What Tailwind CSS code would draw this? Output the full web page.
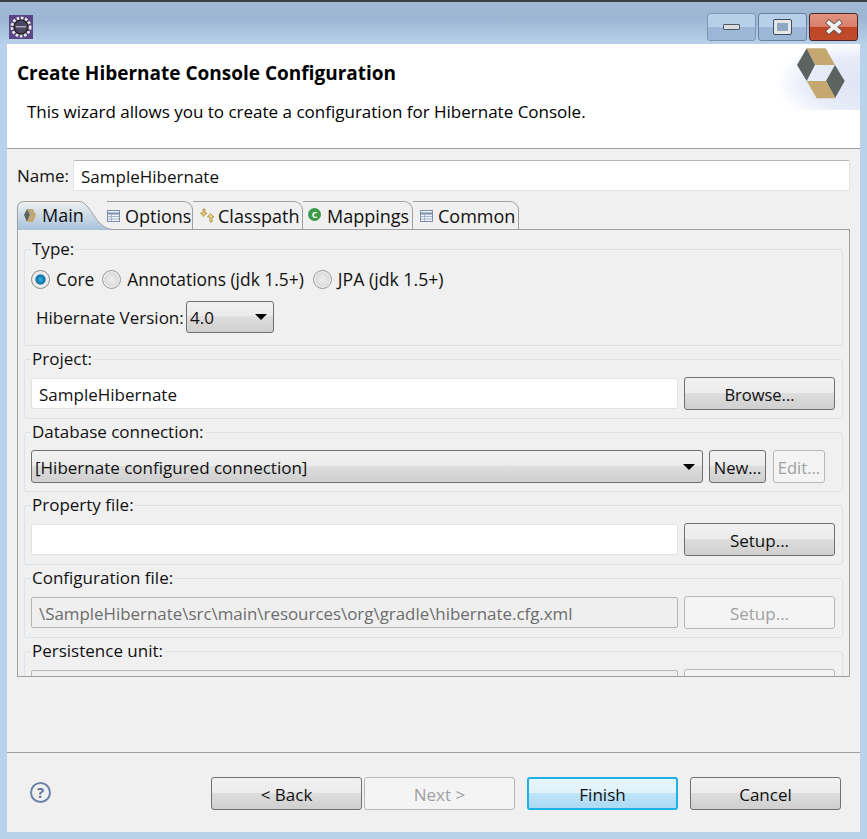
<!DOCTYPE html>
<html>
<head>
<meta charset="utf-8">
<title>Create Hibernate Console Configuration</title>
<script src="https://cdn.jsdelivr.net/npm/@tailwindcss/browser@4"></script>
</head>
<body class="bg-[#b9d1ea] font-['Open_Sans',sans-serif] text-[17px] text-[#111]">
<div class="flex h-[839px] w-[867px] flex-col overflow-hidden bg-[#b9d1ea]">
  <!-- Title bar -->
  <div class="flex h-[44px] shrink-0 items-start border-t-2 border-[#3c3f44] bg-[linear-gradient(#a0b9d5,#9cb6d3_40%,#b9d1ea)]">
    <svg class="ml-[9px] mt-[13px]" width="24" height="24" viewBox="0 0 24 24">
      <rect width="24" height="24" fill="#5a4585"/>
      <circle cx="12" cy="12" r="9" fill="#4d4a66" stroke="#e6e6e6" stroke-width="3" stroke-dasharray="2.6 1.6"/>
      <circle cx="12" cy="12" r="7" fill="#4b4760" stroke="#1c1c22" stroke-width="1.2"/>
      <rect x="7" y="11" width="10" height="1.5" fill="#a8a6bc"/>
    </svg>
    <div class="ml-auto mr-[9px] mt-[11px] flex gap-[2px]">
      <div class="flex h-[28px] w-[49px] items-center justify-center rounded-[3px] border border-[#7e96b3] bg-[linear-gradient(#b7cfe8_50%,#9db8d6_50%)]">
        <div class="h-[6px] w-[17px] rounded-[1px] border border-[#4a5a6c] bg-[#dcdcdc]"></div>
      </div>
      <div class="flex h-[28px] w-[49px] items-center justify-center rounded-[3px] border border-[#66809e] bg-[linear-gradient(#b7cfe8_50%,#9db8d6_50%)]">
        <div class="h-[14px] w-[17px] rounded-[1px] border-[3px] border-[#e6e6e6] bg-[#8ea8c4] outline outline-[#3f4f60]"></div>
      </div>
      <div class="flex h-[28px] w-[49px] items-center justify-center rounded-[3px] border border-[#4a2426] bg-[linear-gradient(#e2937f,#d9806c_48%,#bf4526_50%,#c04c2c)]">
        <svg width="20" height="16" viewBox="0 0 20 16">
          <path d="M3 2 L17 14 M17 2 L3 14" stroke="#4f4a4a" stroke-width="5.4"/>
          <path d="M3.5 2.5 L16.5 13.5 M16.5 2.5 L3.5 13.5" stroke="#f1efef" stroke-width="4"/>
        </svg>
      </div>
    </div>
  </div>

  <div class="mx-[7px] mb-[7px] flex flex-1 flex-col bg-[#f0f0f0]">
    <!-- Banner -->
    <div class="relative h-[105px] shrink-0 overflow-hidden border-b border-[#a0a0a0] bg-white">
      <div class="absolute right-0 top-0 h-[66px] w-[80px] bg-[radial-gradient(ellipse_at_100%_60%,#dfe5f5,#e6ebf8_45%,#ffffff_75%)]"></div>
      <svg class="absolute left-[790px] top-[4px]" width="48" height="51" viewBox="797 48 48 51">
        <path d="M806.7 48.3H825.7L835 65H815Z" fill="#c4a870"/>
        <path d="M806.7 48.3L815 65L806.7 81L797 65Z" fill="#5a6360"/>
        <path d="M835 65L844.7 81L835 98.3L826 81Z" fill="#5a6360"/>
        <path d="M806.7 81H826L835.7 98.3H816.7Z" fill="#c4a870"/>
      </svg>
      <h1 class="relative ml-[10px] mt-[16px] text-[19px] font-bold leading-[26px] text-black">Create Hibernate Console Configuration</h1>
      <p class="relative ml-[20px] mt-[14px] leading-[24px] text-black">This wizard allows you to create a configuration for Hibernate Console.</p>
    </div>

    <div class="flex flex-1 flex-col">
      <!-- Name -->
      <div class="ml-[10px] mr-[10px] mt-[11px] flex h-[31px] shrink-0 items-center">
        <span class="w-[56px] pt-[1px]">Name:</span>
        <div class="flex h-[31px] flex-1 items-center rounded-[2px] border border-[#e3e3e3] border-t-[#b5b5b5] bg-white pl-[7px] pt-[2px]">SampleHibernate</div>
      </div>

      <!-- Tab folder -->
      <div class="mx-[10px] mt-[10px] flex h-[476px] shrink-0 flex-col">
        <div class="flex h-[29px] shrink-0 border-b border-[#a0a0a0] text-[18px]">
          <div class="relative flex w-[96px] shrink-0 items-center pl-[7px]">
            <svg class="absolute left-0 top-0" width="96" height="29" viewBox="0 0 96 29">
              <defs><linearGradient id="active" x1="0" y1="0" x2="0" y2="1"><stop offset="0" stop-color="#f0f0f0"/><stop offset="1" stop-color="#a8c2dc"/></linearGradient></defs>
              <path d="M0.5 29V7Q0.5 0.5 7 0.5H62C74 0.5 78 28 96 28.5V29Z" fill="url(#active)"/>
              <path d="M0.5 29V7Q0.5 0.5 7 0.5H62C74 0.5 78 28 96 28.5" fill="none" stroke="#a0a0a0"/>
            </svg>
            <svg class="relative mr-[6px]" width="12" height="13" viewBox="0 0 12 13">
              <path d="M3 0H9L12 6H6Z" fill="#bda877"/><path d="M3 0L6 6L3 13L0 6Z" fill="#5a6360"/><path d="M12 6L9 13H3L6 6Z" fill="#c4a870"/>
            </svg>
            <span class="relative pt-[1px]">Main</span>
          </div>
          <div class="-ml-[6px] flex w-[86px] items-center rounded-tr-[9px] border-r border-t border-[#a0a0a0]">
            <svg class="mr-[5px]" width="13" height="12" viewBox="0 0 13 12">
              <rect x="0.5" y="0.5" width="12" height="11" fill="#eef1f6" stroke="#7c8fb0"/>
              <path d="M1 3.5H12" stroke="#7c8fb0" stroke-width="2"/><path d="M1 6.5H12M1 9H12M4.5 4V11" stroke="#a7b4ca"/>
            </svg>
            <span class="pt-[1px]">Options</span>
          </div>
          <div class="flex w-[110px] items-center rounded-tr-[9px] border-r border-t border-[#a0a0a0] pl-[6px]">
            <svg class="mr-[3px]" width="16" height="15" viewBox="0 0 16 15">
              <path d="M4 1V5H1.5L4.5 8.5L8 5H6V1Z" fill="#e8cf7c" stroke="#a8863a" stroke-width="0.8"/>
              <path d="M11 14V9H8.5L11.5 5.5L15 9H13V14Z" fill="#f0d98a" stroke="#a8863a" stroke-width="0.8"/>
            </svg>
            <span class="pt-[1px]">Classpath</span>
          </div>
          <div class="flex w-[110px] items-center rounded-tr-[9px] border-r border-t border-[#a0a0a0] pl-[5px]">
            <span class="mb-[3px] mr-[6px] flex h-[13px] w-[13px] items-center justify-center rounded-full bg-[#3c9a48] text-[9px] font-bold leading-none text-white">C</span>
            <span class="pt-[1px]">Mappings</span>
          </div>
          <div class="flex w-[106px] items-center rounded-tr-[9px] border-r border-t border-[#a0a0a0] pl-[7px]">
            <svg class="mr-[5px]" width="13" height="12" viewBox="0 0 13 12">
              <rect x="0.5" y="0.5" width="12" height="11" fill="#eef1f6" stroke="#7c8fb0"/>
              <path d="M1 3.5H12" stroke="#7c8fb0" stroke-width="2"/><path d="M1 6.5H12M1 9H12M4.5 4V11" stroke="#a7b4ca"/>
            </svg>
            <span class="pt-[1px]">Common</span>
          </div>
        </div>

        <div class="flex min-h-0 flex-1 flex-col gap-[3px] overflow-hidden border-x border-b border-[#a0a0a0] px-[6px] pt-[9px]">
          <!-- Type -->
          <fieldset class="h-[107px] shrink-0 rounded-[3px] border border-[#dae2ea] pl-[6px] pr-[7px]">
            <legend class="h-[20px] px-[1px] leading-[20px]">Type:</legend>
            <div class="mt-[10px] flex h-[20px] items-center text-[17.4px]">
              <span class="h-[19px] w-[19px] rounded-full border border-[#8a8a8a] bg-[radial-gradient(circle,#35b4e8_0,#0b6fa3_38%,#e8e8e8_46%,#f8f8f8)]"></span>
              <span class="ml-[6px]">Core</span>
              <span class="ml-[8px] h-[19px] w-[19px] rounded-full border border-[#9a9a9a] bg-[radial-gradient(circle,#eeeeee_0,#dcdcdc_55%,#f5f5f5_72%)]"></span>
              <span class="ml-[6px]">Annotations (jdk 1.5+)</span>
              <span class="ml-[9px] h-[19px] w-[19px] rounded-full border border-[#9a9a9a] bg-[radial-gradient(circle,#eeeeee_0,#dcdcdc_55%,#f5f5f5_72%)]"></span>
              <span class="ml-[6px] text-[17.7px]">JPA (jdk 1.5+)</span>
            </div>
            <div class="ml-[5px] mt-[12px] flex h-[32px] items-center pt-[1px]">
              <span class="w-[150px] pt-[1px]">Hibernate Version:</span>
              <div class="-mt-[1px] flex h-[32px] w-[88px] items-center justify-between rounded-[3px] border border-[#707070] bg-[linear-gradient(#f2f2f2,#ebebeb_45%,#dddddd_50%,#cfcfcf)] pl-[3px] pr-[6px]">
                <span class="pt-[2px]">4.0</span>
                <span class="h-0 w-0 border-x-[6px] border-t-[6px] border-x-transparent border-t-black"></span>
              </div>
            </div>
          </fieldset>

          <!-- Project -->
          <fieldset class="h-[70px] shrink-0 rounded-[3px] border border-[#dae2ea] pl-[6px] pr-[7px]">
            <legend class="h-[20px] px-[1px] leading-[20px]">Project:</legend>
            <div class="mt-[8px] flex items-center justify-between">
              <div class="flex h-[31px] w-[647px] items-center rounded-[2px] border border-[#e3e3e3] bg-white pl-[7px] pt-[2px]">SampleHibernate</div>
              <div class="flex h-[33px] w-[151px] items-center justify-center rounded-[3px] border border-[#707070] bg-[linear-gradient(#f2f2f2,#ebebeb_48%,#dddddd_50%,#cfcfcf)] pt-[3px] text-[16.5px]">Browse...</div>
            </div>
          </fieldset>

          <!-- Database connection -->
          <fieldset class="h-[70px] shrink-0 rounded-[3px] border border-[#dae2ea] pl-[6px] pr-[7px]">
            <legend class="h-[20px] px-[1px] leading-[20px]">Database connection:</legend>
            <div class="mt-[8px] flex items-center">
              <div class="flex h-[33px] w-[672px] items-center justify-between rounded-[3px] border border-[#707070] bg-[linear-gradient(#f2f2f2,#ebebeb_48%,#dddddd_50%,#cfcfcf)] pl-[3px] pr-[7px]">
                <span class="pt-[2px]">[Hibernate configured connection]</span>
                <span class="h-0 w-0 border-x-[6px] border-t-[6px] border-x-transparent border-t-black"></span>
              </div>
              <div class="ml-[6px] flex h-[33px] w-[57px] items-center justify-center rounded-[3px] border border-[#707070] bg-[linear-gradient(#f2f2f2,#ebebeb_48%,#dddddd_50%,#cfcfcf)] pt-[3px] text-[16.5px]">New...</div>
              <div class="ml-[7px] flex h-[33px] w-[52px] items-center justify-center rounded-[3px] border border-[#b8b8b8] bg-[#f4f4f4] pt-[3px] text-[16.5px] text-[#a0a0a0]">Edit...</div>
            </div>
          </fieldset>

          <!-- Property file -->
          <fieldset class="h-[70px] shrink-0 rounded-[3px] border border-[#dae2ea] pl-[6px] pr-[7px]">
            <legend class="h-[20px] px-[1px] leading-[20px]">Property file:</legend>
            <div class="mt-[8px] flex items-center justify-between">
              <div class="h-[31px] w-[647px] rounded-[2px] border border-[#e3e3e3] bg-white"></div>
              <div class="flex h-[33px] w-[151px] items-center justify-center rounded-[3px] border border-[#707070] bg-[linear-gradient(#f2f2f2,#ebebeb_48%,#dddddd_50%,#cfcfcf)] pt-[2px]">Setup...</div>
            </div>
          </fieldset>

          <!-- Configuration file -->
          <fieldset class="h-[70px] shrink-0 rounded-[3px] border border-[#dae2ea] pl-[6px] pr-[7px]">
            <legend class="h-[20px] px-[1px] leading-[20px]">Configuration file:</legend>
            <div class="mt-[8px] flex items-center justify-between">
              <div class="flex h-[31px] w-[647px] items-center rounded-[2px] border border-[#b5b5b5] bg-[#efefef] pl-[7px] pt-[2px] text-[16.9px] text-[#6d6d6d]">\SampleHibernate\src\main\resources\org\gradle\hibernate.cfg.xml</div>
              <div class="flex h-[33px] w-[151px] items-center justify-center rounded-[3px] border border-[#b8b8b8] bg-[#f4f4f4] pt-[2px] text-[#a0a0a0]">Setup...</div>
            </div>
          </fieldset>

          <!-- Persistence unit, cut off by the folder -->
          <fieldset class="h-[70px] shrink-0 rounded-[3px] border border-[#dae2ea] pl-[6px] pr-[7px]">
            <legend class="h-[20px] px-[1px] leading-[20px]">Persistence unit:</legend>
            <div class="mt-[8px] flex items-center justify-between">
              <div class="h-[31px] w-[647px] rounded-[2px] border border-[#b5b5b5] bg-[#efefef]"></div>
              <div class="h-[33px] w-[151px] rounded-[3px] border border-[#b8b8b8] bg-[#f4f4f4]"></div>
            </div>
          </fieldset>
        </div>
      </div>

      <div class="flex-1"></div>

      <!-- Buttons -->
      <div class="flex h-[80px] shrink-0 items-start border-t border-[#a0a0a0] pt-[24px]">
        <div class="ml-[23px] mt-[5px] flex h-[21px] w-[21px] items-center justify-center rounded-full border-2 border-[#6c82a6] text-[15px] font-bold leading-none text-[#5f7699]">?</div>
        <div class="ml-[160px] flex h-[33px] w-[151px] items-center justify-center rounded-[3px] border border-[#707070] bg-[linear-gradient(#f2f2f2,#ebebeb_48%,#dddddd_50%,#cfcfcf)] pt-[2px]">&lt; Back</div>
        <div class="ml-[2px] flex h-[33px] w-[151px] items-center justify-center rounded-[3px] border border-[#b8b8b8] bg-[#f4f4f4] pt-[2px] text-[#a0a0a0]">Next &gt;</div>
        <div class="ml-[12px] flex h-[33px] w-[151px] items-center justify-center rounded-[3px] border-2 border-[#1fb0e6] bg-[linear-gradient(#e8f6fd,#e0f2fb_48%,#bfe4f7_50%,#abdaf3)] pt-[2px]">Finish</div>
        <div class="ml-[12px] flex h-[33px] w-[151px] items-center justify-center rounded-[3px] border border-[#707070] bg-[linear-gradient(#f2f2f2,#ebebeb_48%,#dddddd_50%,#cfcfcf)] pt-[2px]">Cancel</div>
      </div>
    </div>
  </div>
</div>
</body>
</html>
